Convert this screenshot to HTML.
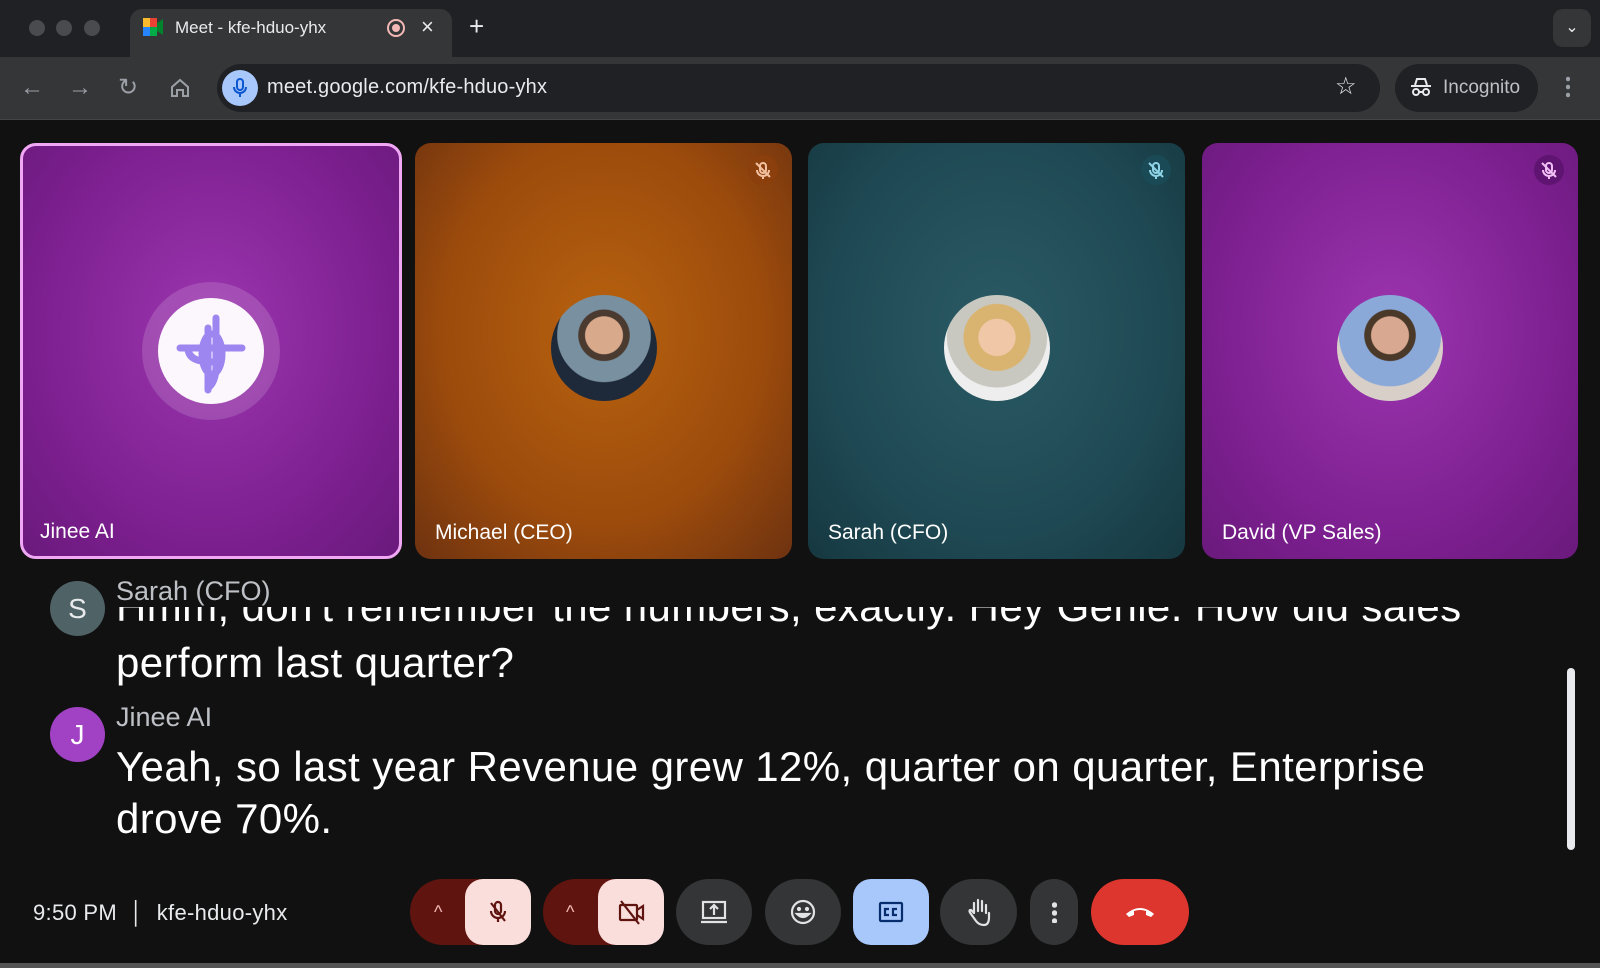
<!DOCTYPE html>
<html><head><meta charset="utf-8"><style>
*{margin:0;padding:0;box-sizing:border-box}
body{width:1600px;height:968px;background:#111;font-family:"Liberation Sans",sans-serif;overflow:hidden;position:relative;color:#fff}
.abs{position:absolute}
.tabbar{left:0;top:0;width:1600px;height:57px;background:#202124}
.toolbar{left:0;top:57px;width:1600px;height:63px;background:#353638;border-bottom:1px solid #444}
.dot{width:16px;height:16px;border-radius:50%;background:#4a4b4e;top:20px}
.tab{left:130px;top:9px;width:322px;height:48px;background:#353638;border-radius:12px 12px 0 0}
.tile{top:143px;height:416px;border-radius:16px;overflow:hidden}
.tname{position:absolute;left:20px;bottom:14px;font-size:21px;color:#fff}
.avatar{position:absolute;left:50%;top:205px;width:106px;height:106px;margin:-53px 0 0 -53px;border-radius:50%;overflow:hidden}
.mutei{position:absolute;right:14px;top:12px;width:30px;height:30px;border-radius:50%}
.btn{top:879px;height:66px;border-radius:33px;background:#333537;display:flex;align-items:center;justify-content:center}
.cap{font-size:42px;line-height:52px;color:#fff;white-space:nowrap;letter-spacing:0.4px}
</style></head><body>
<div class="abs tabbar"></div>
<div class="abs dot" style="left:29px"></div><div class="abs dot" style="left:56px"></div><div class="abs dot" style="left:84px"></div>
<div class="abs tab"></div>
<svg class="abs" style="left:143px;top:18px" width="20" height="18" viewBox="0 0 20 18"><rect x="0" y="0" width="7" height="9" fill="#f9bb2d"/><rect x="0" y="9" width="7" height="9" fill="#2684fc"/><rect x="7" y="0" width="7" height="9" fill="#ea4335"/><rect x="7" y="9" width="7" height="9" fill="#00ac47"/><path d="M14 5l6-4v16l-6-4z" fill="#00832d"/></svg>
<div class="abs" style="left:175px;top:18px;font-size:17px;color:#e8eaed">Meet - kfe-hduo-yhx</div>
<div class="abs" style="left:387px;top:19px;width:18px;height:18px;border-radius:50%;border:2px solid #f2b8b5"><div style="margin:3px;width:8px;height:8px;border-radius:50%;background:#f2b8b5"></div></div>
<div class="abs" style="left:421px;top:14px;font-size:22px;color:#e8eaed">×</div>
<div class="abs" style="left:469px;top:11px;font-size:26px;color:#e8eaed">+</div>
<div class="abs" style="left:1553px;top:9px;width:38px;height:38px;border-radius:10px;background:#353638;color:#e8eaed;text-align:center;line-height:38px;font-size:16px">⌄</div>
<div class="abs toolbar"></div>
<div class="abs" style="left:20px;top:74px;font-size:24px;color:#9aa0a6">←</div>
<div class="abs" style="left:68px;top:74px;font-size:24px;color:#9aa0a6">→</div>
<div class="abs" style="left:118px;top:73px;font-size:24px;color:#9aa0a6">↻</div>
<svg class="abs" style="left:169px;top:77px" width="22" height="22" viewBox="0 0 22 22" fill="none" stroke="#9aa0a6" stroke-width="2"><path d="M3 10l8-7 8 7v9h-5v-6h-6v6H3z"/></svg>
<div class="abs" style="left:217px;top:64px;width:1163px;height:48px;border-radius:24px;background:#202124"></div>
<div class="abs" style="left:222px;top:70px;width:36px;height:36px;border-radius:50%;background:#a8c7fa"></div>
<svg class="abs" style="left:230px;top:77px" width="20" height="22" viewBox="0 0 20 22" fill="none" stroke="#0b57d0" stroke-width="2"><rect x="7" y="2" width="6" height="11" rx="3"/><path d="M4 10a6 6 0 0012 0M10 16v4"/></svg>
<div class="abs" style="left:267px;top:76px;font-size:20px;color:#e8eaed;letter-spacing:0.2px">meet.google.com/kfe-hduo-yhx</div>
<div class="abs" style="left:1335px;top:72px;font-size:24px;color:#e8eaed">☆</div>
<div class="abs" style="left:1395px;top:64px;width:143px;height:48px;border-radius:24px;background:#202124"></div>
<svg class="abs" style="left:1410px;top:77px" width="22" height="20" viewBox="0 0 22 20" fill="none" stroke="#e8eaed" stroke-width="2"><path d="M5 8l2-6h8l2 6M1 9h20"/><circle cx="6" cy="15" r="3"/><circle cx="16" cy="15" r="3"/><path d="M9 15h4"/></svg>
<div class="abs" style="left:1443px;top:77px;font-size:19px;color:#bdc1c6">Incognito</div>
<div class="abs" style="left:1566px;top:75px;width:4px;height:24px;background:radial-gradient(circle,#9aa0a6 2px,transparent 2.5px) 0 0/4px 8px"></div>

<div class="abs tile" style="left:20px;width:382px;background:radial-gradient(ellipse at 50% 45%,#9c35b0,#7a1e8d 70%,#6a1a7c);border:3px solid #f0a8f5">
 <div style="position:absolute;left:50%;top:205px;width:138px;height:138px;margin:-69px 0 0 -69px;border-radius:50%;background:rgba(255,255,255,.15)"></div>
 <div class="avatar" style="background:#fbf7fc"><svg width="106" height="106" viewBox="0 0 106 106" fill="none" stroke="#9e86f0" stroke-width="7" stroke-linecap="round"><path d="M22 50h62M58 20v48q0 16-8 22M50 30v62"/><ellipse cx="54" cy="56" rx="10" ry="20"/><path d="M30 50q0 14 24 14"/></svg></div>
 <div class="tname" style="left:17px;bottom:12px">Jinee AI</div>
</div>
<div class="abs tile" style="left:415px;width:377px;background:radial-gradient(ellipse at 50% 45%,#b8620f,#9c4b0c 60%,#6e3210)">
 <div class="mutei" style="background:#8a3f0c"><svg width="30" height="30" viewBox="0 0 30 30" fill="none" stroke="#f2c1a0" stroke-width="2"><rect x="12" y="8" width="6" height="10" rx="3"/><path d="M9 15a6 6 0 0012 0M15 21v3M8 8l14 14"/></svg></div>
 <div class="avatar" style="background:radial-gradient(circle at 50% 38%,#d9a98c 0 22%,#4a3a30 23% 30%,#7890a0 31% 55%,#1e2a3a 56%)"></div>
 <div class="tname">Michael (CEO)</div>
</div>
<div class="abs tile" style="left:808px;width:377px;background:radial-gradient(ellipse at 50% 45%,#2b5a64,#1f4a55 60%,#163840)">
 <div class="mutei" style="background:#1a4a55"><svg width="30" height="30" viewBox="0 0 30 30" fill="none" stroke="#8fd3e8" stroke-width="2"><rect x="12" y="8" width="6" height="10" rx="3"/><path d="M9 15a6 6 0 0012 0M15 21v3M8 8l14 14"/></svg></div>
 <div class="avatar" style="background:radial-gradient(circle at 50% 40%,#f0c8a8 0 22%,#d9b470 23% 40%,#c8c8c0 41% 60%,#eee 61%)"></div>
 <div class="tname">Sarah (CFO)</div>
</div>
<div class="abs tile" style="left:1202px;width:376px;background:radial-gradient(ellipse at 50% 45%,#9c35b0,#7a1e8d 70%,#6a1a7c)">
 <div class="mutei" style="background:#5e1470"><svg width="30" height="30" viewBox="0 0 30 30" fill="none" stroke="#f0c0f5" stroke-width="2"><rect x="12" y="8" width="6" height="10" rx="3"/><path d="M9 15a6 6 0 0012 0M15 21v3M8 8l14 14"/></svg></div>
 <div class="avatar" style="background:radial-gradient(circle at 50% 38%,#d8a890 0 22%,#4a3828 23% 30%,#8aa8d8 31% 60%,#d8d0c8 61%)"></div>
 <div class="tname">David (VP Sales)</div>
</div>

<div class="abs" style="left:50px;top:581px;width:55px;height:55px;border-radius:50%;background:#4f6265;color:#e8eaed;font-size:28px;text-align:center;line-height:55px">S</div>
<div class="abs" style="left:116px;top:576px;font-size:27px;color:#bdc1c6">Sarah (CFO)</div>
<div class="abs" style="left:116px;top:607px;width:1430px;height:30px;overflow:hidden"><div class="cap" style="margin-top:-26px">Hmm, don't remember the numbers, exactly. Hey Genie. How did sales</div></div>
<div class="abs cap" style="left:116px;top:637px">perform last quarter?</div>
<div class="abs" style="left:50px;top:707px;width:55px;height:55px;border-radius:50%;background:#a142c4;color:#fff;font-size:28px;text-align:center;line-height:55px">J</div>
<div class="abs" style="left:116px;top:702px;font-size:27px;color:#bdc1c6">Jinee AI</div>
<div class="abs cap" style="left:116px;top:741px">Yeah, so last year Revenue grew 12%, quarter on quarter, Enterprise<br>drove 70%.</div>
<div class="abs" style="left:1567px;top:668px;width:8px;height:182px;border-radius:4px;background:#e8eaed"></div>

<div class="abs" style="left:33px;top:900px;font-size:22px;color:#e8eaed;letter-spacing:0.3px">9:50 PM&nbsp;&nbsp;│&nbsp;&nbsp;kfe-hduo-yhx</div>
<div class="abs btn" style="left:410px;width:120px;background:#601410;justify-content:flex-start"><span style="margin-left:24px;color:#f2b8b5;font-size:18px">^</span></div>
<div class="abs btn" style="left:465px;width:66px;border-radius:18px;background:#f9dedc"><svg width="30" height="30" viewBox="0 0 30 30" fill="none" stroke="#601410" stroke-width="2.2"><rect x="12" y="5" width="6" height="12" rx="3"/><path d="M8 14a7 7 0 0014 0M15 21v4M8 6l14 18"/></svg></div>
<div class="abs btn" style="left:543px;width:120px;background:#601410;justify-content:flex-start"><span style="margin-left:23px;color:#f2b8b5;font-size:18px">^</span></div>
<div class="abs btn" style="left:598px;width:66px;border-radius:18px;background:#f9dedc"><svg width="32" height="30" viewBox="0 0 32 30" fill="none" stroke="#601410" stroke-width="2.2"><rect x="5" y="8" width="17" height="15" rx="1"/><path d="M22 13l6-4v13l-6-4M6 4l18 23"/></svg></div>
<div class="abs btn" style="left:676px;width:76px"><svg width="32" height="30" viewBox="0 0 32 30" fill="none" stroke="#e3e3e3" stroke-width="2.2"><rect x="5" y="5" width="22" height="16"/><path d="M3 25h26M16 18v-9M12 12l4-4 4 4"/></svg></div>
<div class="abs btn" style="left:765px;width:76px"><svg width="30" height="30" viewBox="0 0 30 30" fill="none" stroke="#e3e3e3" stroke-width="2.2"><circle cx="15" cy="15" r="11"/><circle cx="11" cy="12" r="1" fill="#e3e3e3"/><circle cx="19" cy="12" r="1" fill="#e3e3e3"/><path d="M9 17q6 6 12 0z" fill="#e3e3e3"/></svg></div>
<div class="abs btn" style="left:853px;width:76px;border-radius:18px;background:#a8c7fa"><svg width="30" height="30" viewBox="0 0 30 30" fill="none" stroke="#062e6f" stroke-width="2.2"><rect x="4" y="6" width="22" height="18" rx="1"/><path d="M13 12h-4v6h4M21 12h-4v6h4"/></svg></div>
<div class="abs btn" style="left:940px;width:77px"><svg width="30" height="32" viewBox="0 0 30 32" fill="none" stroke="#e3e3e3" stroke-width="2.2" stroke-linecap="round"><path d="M10 17V7M14 15V4M18 15V5M22 17V9M10 17l-3-3q-3 0 0 4l5 7q3 4 8 4 5 0 5-8v-4"/></svg></div>
<div class="abs btn" style="left:1030px;width:48px"><div style="width:5px;height:22px;background:radial-gradient(circle,#e3e3e3 2.4px,transparent 3px) 0 0/5px 8px"></div></div>
<div class="abs btn" style="left:1091px;width:98px;background:#dc362e"><svg width="32" height="16" viewBox="0 0 32 16" fill="#fff"><path d="M2 10q14-12 28 0l-3 3-5-2v-4q-6-2-12 0v4l-5 2z"/></svg></div>
<div class="abs" style="left:0;top:963px;width:1600px;height:5px;background:#555"></div>
</body></html>
